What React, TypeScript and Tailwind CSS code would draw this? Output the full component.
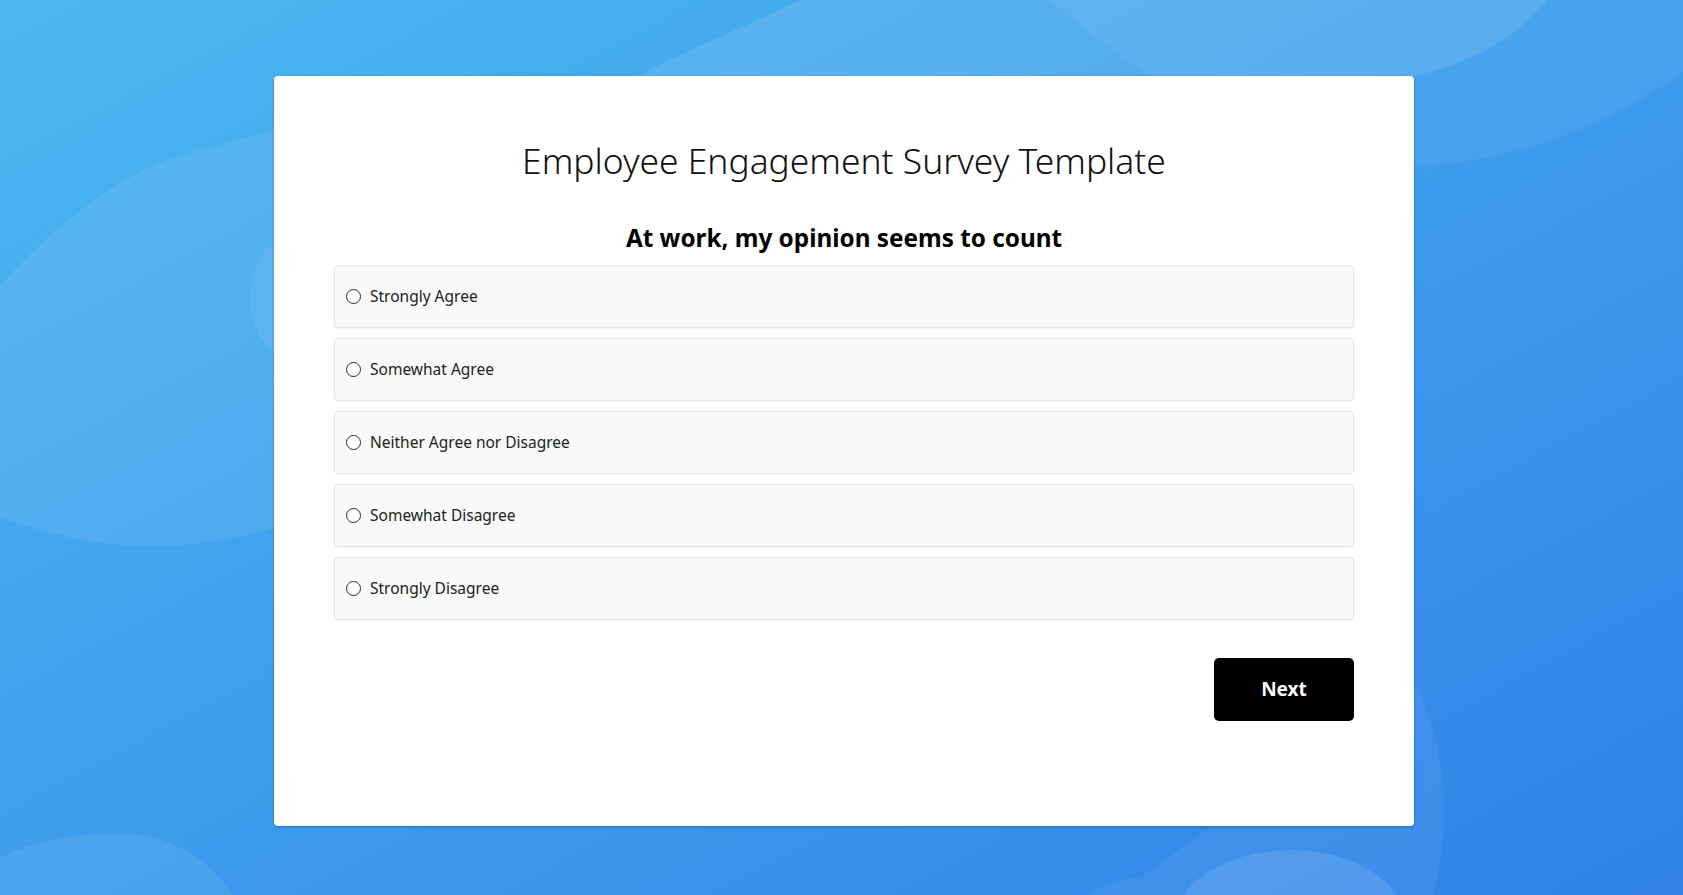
import React, { useState } from 'react';

const options = [
  'Strongly Agree',
  'Somewhat Agree',
  'Neither Agree nor Disagree',
  'Somewhat Disagree',
  'Strongly Disagree',
];

const Backdrop: React.FC = () => (
  <svg
    className="absolute inset-0 w-full h-full"
    viewBox="0 0 1683 895"
    preserveAspectRatio="none"
    aria-hidden="true"
  >
    {/* top right wash */}
    <path d="M1050,0 C1150,90 1300,165 1413,165 C1510,165 1610,125 1683,72 L1683,0 Z" fill="#ffffff" fillOpacity="0.05" />
    {/* top blob */}
    <path d="M800,0 C720,40 650,60 590,110 L1413,110 L1413,76 C1460,66 1510,45 1548,0 Z" fill="#ffffff" fillOpacity="0.1" />
    {/* left blob */}
    <path d="M0,285 C60,220 130,165 200,150 C240,140 270,130 300,126 L300,520 C220,548 120,562 0,517 Z" fill="#ffffff" fillOpacity="0.07" />
    <ellipse cx="292" cy="298" rx="42" ry="60" fill="#ffffff" fillOpacity="0.06" />
    {/* bottom left */}
    <path d="M0,857 C40,840 80,833 117,833 C170,833 210,860 233,895 L0,895 Z" fill="#ffffff" fillOpacity="0.07" />
    {/* bottom right */}
    <path d="M1086,895 C1100,885 1120,878 1140,878 L1413,681 C1440,730 1446,790 1444,820 C1442,860 1436,880 1434,895 Z" fill="#ffffff" fillOpacity="0.05" />
    <path d="M1183,895 C1205,865 1250,850 1292,850 C1340,850 1380,870 1397,895 Z" fill="#ffffff" fillOpacity="0.1" />
  </svg>
);

export default function App() {
  const [choice, setChoice] = useState<string | null>(null);

  return (
    <div className="relative h-[895px] overflow-hidden bg-linear-to-br from-[#4cb7f0] to-[#3282e8] font-['Noto_Sans','Open_Sans',sans-serif]">
      <Backdrop />
      <div className="relative pt-[76px]">
        <div className="ml-[274px] w-[1140px] h-[750px] bg-white rounded-[4px] shadow-[0_1px_3px_rgba(0,0,0,0.25)] px-[60px] pt-[58px]">
          <h1 className="text-center text-[35.4px] leading-[52px] font-light text-[#111]">
            Employee Engagement Survey Template
          </h1>
          <h2 className="mt-[36px] text-center text-[24.3px] leading-[32px] font-bold text-black">
            At work, my opinion seems to count
          </h2>
          <div className="mt-[11px] flex flex-col gap-[10px]">
            {options.map((o) => (
              <label
                key={o}
                className="flex items-center h-[63px] px-[11px] bg-[#f9f9f9] border border-[#e6e6e6] rounded-[4px] shadow-[0_1px_1px_rgba(0,0,0,0.04)] cursor-pointer"
              >
                <input
                  type="radio"
                  name="opinion"
                  checked={choice === o}
                  onChange={() => setChoice(o)}
                  className="appearance-none w-[14.5px] h-[14.5px] rounded-full border-[1.3px] border-[#2a2a2a] bg-white checked:border-[4px] m-0"
                />
                <span className="ml-[9.5px] text-[15.5px] text-[#222]">{o}</span>
              </label>
            ))}
          </div>
          <div className="mt-[38px] flex justify-end">
            <button
              type="button"
              className="w-[140px] h-[63px] bg-black rounded-[5px] text-white text-[19px] font-bold"
            >
              Next
            </button>
          </div>
        </div>
      </div>
    </div>
  );
}
